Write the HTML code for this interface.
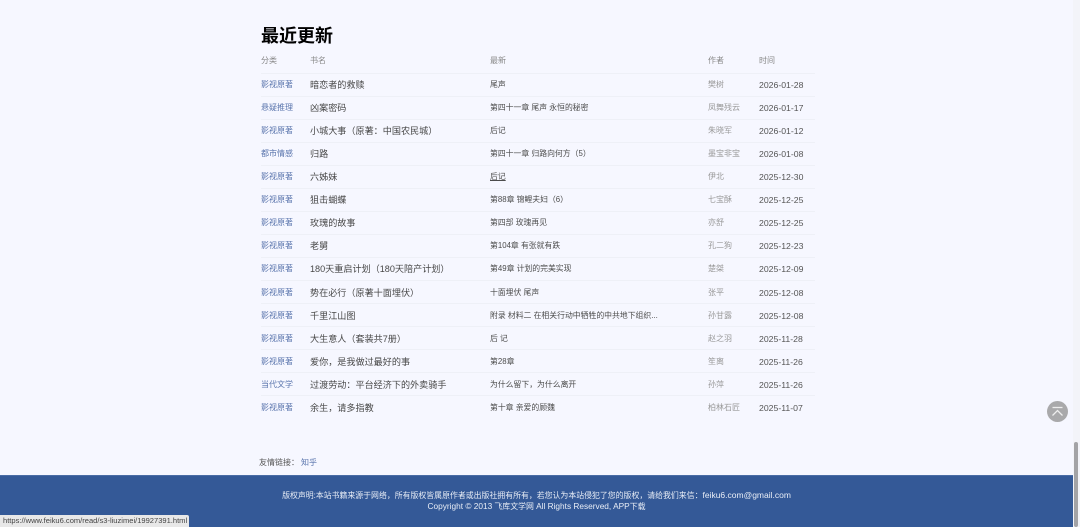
<!DOCTYPE html>
<html lang="zh">
<head>
<meta charset="utf-8">
<title>最近更新</title>
<style>
html,body{margin:0;padding:0;width:1080px;height:527px;overflow:hidden;background:#f6f7ff;}
body{position:relative;font-family:"Liberation Sans","Noto Sans CJK SC",sans-serif;}
#all{position:absolute;left:0;top:0;width:1080px;height:527px;background:#f6f7ff;filter:blur(.3px);}
#txt{position:absolute;left:0;top:1px;width:1080px;height:480px;}
.t{position:absolute;white-space:nowrap;line-height:12px;height:12px;}
h1{position:absolute;left:261px;top:23px;margin:0;font-size:18px;line-height:24px;font-weight:700;color:#000;}
.h{font-size:8px;color:#888;top:54px;}
.line{position:absolute;left:261px;width:554px;height:1px;background:#eef0f7;}
.row{position:absolute;left:0;top:0;width:1080px;height:23px;}
.c{left:261px;font-size:8px;color:#5a75ad;}
.b{left:310px;font-size:9.1px;color:#484848;}
.l{left:490px;font-size:7.85px;color:#4c4c4c;}
.a{left:708px;font-size:8px;color:#999;}
.d{left:759px;font-size:8.7px;color:#555;}
#footer{position:absolute;left:0;top:475px;width:1080px;height:52px;background:#345997;border-top:1px solid #4a6ca5;box-sizing:border-box;}
.f{position:absolute;left:0;width:1073px;text-align:center;color:#e8edf6;font-size:7.9px;line-height:12px;white-space:nowrap;}
.f span{font-size:8.5px;}
.f span.s{font-size:8.3px;}
#status{position:absolute;left:0;top:515px;width:189px;height:12px;background:#e8e8e8;color:#444;font-size:7.55px;line-height:12px;padding-left:3px;box-sizing:border-box;border-top-right-radius:2px;white-space:nowrap;overflow:hidden;}
#top{position:absolute;left:1047px;top:401px;width:21px;height:21px;border-radius:50%;background:#a9a9ab;}
#track{position:absolute;left:1073px;top:0;width:7px;height:527px;background:#f3f4f9;}
#thumb{position:absolute;left:1074px;top:442px;width:4px;height:85px;background:#a3a3a6;border-radius:2px;}
</style>
</head>
<body>
<div id="all">
<div class="line" style="top:73px"></div>
<div class="line" style="top:96px"></div>
<div class="line" style="top:119px"></div>
<div class="line" style="top:142px"></div>
<div class="line" style="top:165px"></div>
<div class="line" style="top:188px"></div>
<div class="line" style="top:211px"></div>
<div class="line" style="top:234px"></div>
<div class="line" style="top:257px"></div>
<div class="line" style="top:280px"></div>
<div class="line" style="top:303px"></div>
<div class="line" style="top:326px"></div>
<div class="line" style="top:349px"></div>
<div class="line" style="top:372px"></div>
<div class="line" style="top:395px"></div>

<div id="txt">
<h1>最近更新</h1>
<div class="t h" style="left:261px">分类</div>
<div class="t h" style="left:310px">书名</div>
<div class="t h" style="left:490px">最新</div>
<div class="t h" style="left:708px">作者</div>
<div class="t h" style="left:759px">时间</div>

<div class="row" style="top:78px"><span class="t c">影视原著</span><span class="t b">暗恋者的救赎</span><span class="t l">尾声</span><span class="t a">樊树</span><span class="t d">2026-01-28</span></div>
<div class="row" style="top:101px"><span class="t c">悬疑推理</span><span class="t b">凶案密码</span><span class="t l">第四十一章 尾声 永恒的秘密</span><span class="t a">凤舞残云</span><span class="t d">2026-01-17</span></div>
<div class="row" style="top:124px"><span class="t c">影视原著</span><span class="t b">小城大事（原著：中国农民城）</span><span class="t l">后记</span><span class="t a">朱晓军</span><span class="t d">2026-01-12</span></div>
<div class="row" style="top:147px"><span class="t c">都市情感</span><span class="t b">归路</span><span class="t l">第四十一章 归路向何方（5）</span><span class="t a">墨宝非宝</span><span class="t d">2026-01-08</span></div>
<div class="row" style="top:170px"><span class="t c">影视原著</span><span class="t b">六姊妹</span><span class="t l" style="text-decoration:underline">后记</span><span class="t a">伊北</span><span class="t d">2025-12-30</span></div>
<div class="row" style="top:193px"><span class="t c">影视原著</span><span class="t b">狙击蝴蝶</span><span class="t l">第88章 锦鲤夫妇（6）</span><span class="t a">七宝酥</span><span class="t d">2025-12-25</span></div>
<div class="row" style="top:216px"><span class="t c">影视原著</span><span class="t b">玫瑰的故事</span><span class="t l">第四部 玫瑰再见</span><span class="t a">亦舒</span><span class="t d">2025-12-25</span></div>
<div class="row" style="top:239px"><span class="t c">影视原著</span><span class="t b">老舅</span><span class="t l">第104章 有张就有跌</span><span class="t a">孔二狗</span><span class="t d">2025-12-23</span></div>
<div class="row" style="top:262px"><span class="t c">影视原著</span><span class="t b">180天重启计划（180天陪产计划）</span><span class="t l">第49章 计划的完美实现</span><span class="t a">楚桀</span><span class="t d">2025-12-09</span></div>
<div class="row" style="top:286px"><span class="t c">影视原著</span><span class="t b">势在必行（原著十面埋伏）</span><span class="t l">十面埋伏 尾声</span><span class="t a">张平</span><span class="t d">2025-12-08</span></div>
<div class="row" style="top:309px"><span class="t c">影视原著</span><span class="t b">千里江山图</span><span class="t l">附录 材料二 在相关行动中牺牲的中共地下组织...</span><span class="t a">孙甘露</span><span class="t d">2025-12-08</span></div>
<div class="row" style="top:332px"><span class="t c">影视原著</span><span class="t b">大生意人（套装共7册）</span><span class="t l">后 记</span><span class="t a">赵之羽</span><span class="t d">2025-11-28</span></div>
<div class="row" style="top:355px"><span class="t c">影视原著</span><span class="t b">爱你，是我做过最好的事</span><span class="t l">第28章</span><span class="t a">笙离</span><span class="t d">2025-11-26</span></div>
<div class="row" style="top:378px"><span class="t c">当代文学</span><span class="t b">过渡劳动：平台经济下的外卖骑手</span><span class="t l">为什么留下，为什么离开</span><span class="t a">孙萍</span><span class="t d">2025-11-26</span></div>
<div class="row" style="top:401px"><span class="t c">影视原著</span><span class="t b">余生，请多指教</span><span class="t l">第十章 亲爱的顾魏</span><span class="t a">柏林石匠</span><span class="t d">2025-11-07</span></div>

<div class="t" style="left:259px;top:456px;font-size:8px;color:#555">友情链接：</div>
<div class="t" style="left:301px;top:456px;font-size:8px;color:#5a75ad">知乎</div>
</div>

<div id="footer">
<div class="f" style="top:13px">版权声明:本站书籍来源于网络，所有版权皆属原作者或出版社拥有所有，若您认为本站侵犯了您的版权，请给我们来信：<span>feiku6.com@gmail.com</span></div>
<div class="f" style="top:24px"><span class="s">Copyright © 2013</span> 飞库文学网 <span class="s">All Rights Reserved, APP</span>下载</div>
</div>

<div id="top">
<svg width="21" height="21" viewBox="0 0 21 21" fill="none" stroke="#eeeeee" stroke-width="1.3">
<path d="M5.5 6.5H15.5"/>
<path d="M5.5 14.5L10.5 9.5L15.5 14.5"/>
</svg>
</div>

<div id="track"></div>
<div id="thumb"></div>
<div id="status">https://www.feiku6.com/read/s3-liuzimei/19927391.html</div>
</div>
</body>
</html>
